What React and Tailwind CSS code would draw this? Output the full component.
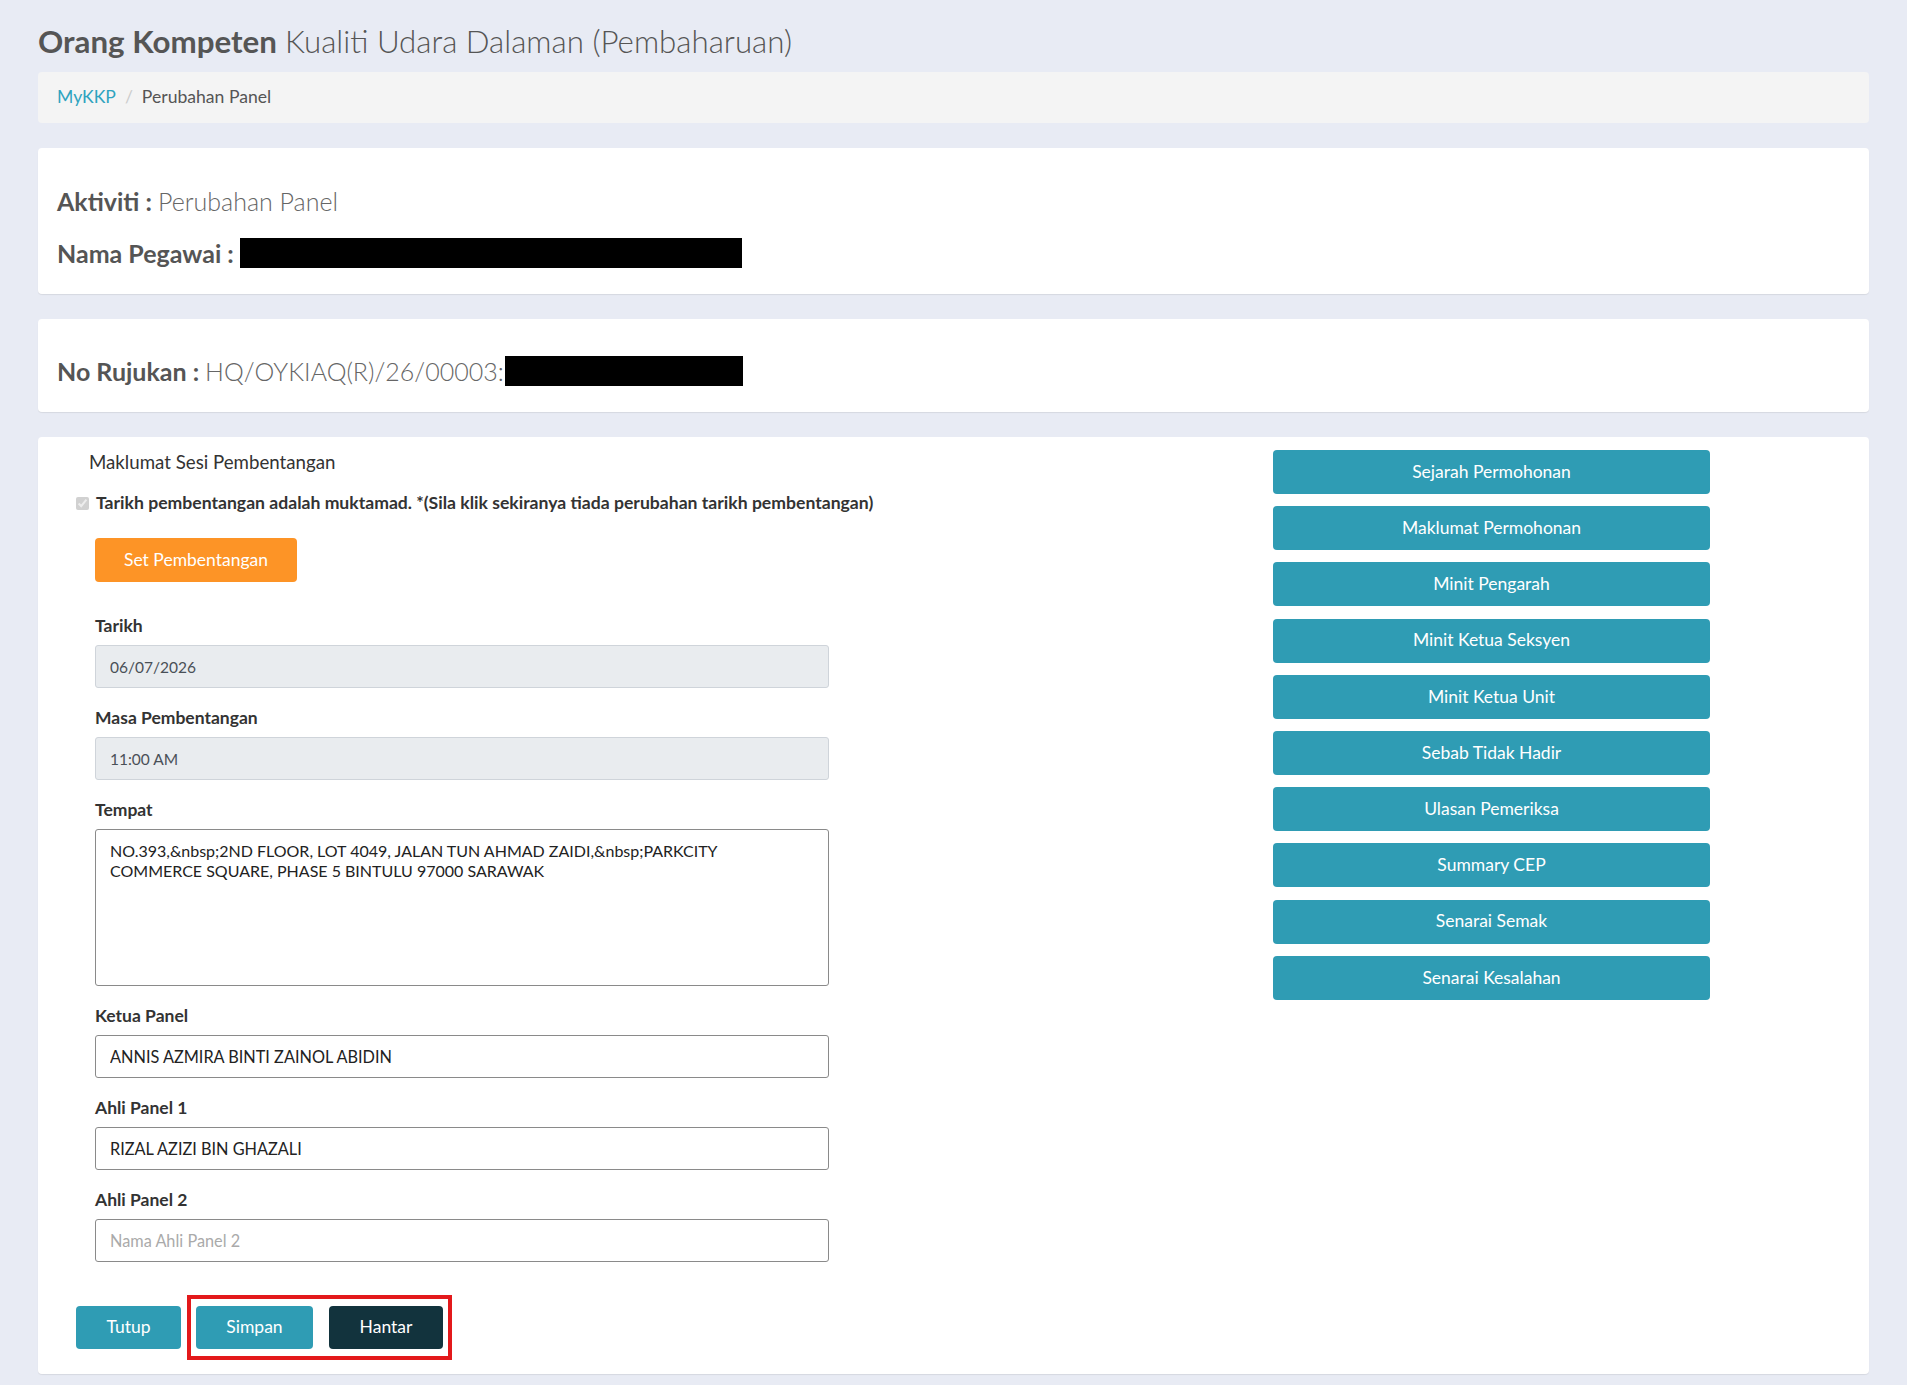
import React from 'react';

const sideButtons = [
    'Sejarah Permohonan',
    'Maklumat Permohonan',
    'Minit Pengarah',
    'Minit Ketua Seksyen',
    'Minit Ketua Unit',
    'Sebab Tidak Hadir',
    'Ulasan Pemeriksa',
    'Summary CEP',
    'Senarai Semak',
    'Senarai Kesalahan',
];

const tempat = 'NO.393,&nbsp;2ND FLOOR, LOT 4049, JALAN TUN AHMAD ZAIDI,&nbsp;PARKCITY COMMERCE SQUARE, PHASE 5 BINTULU 97000 SARAWAK';

function Field({ label, children }) {
    return (
        <div className="mb-[18px]">
            <label className="block text-[17.5px] leading-[24px] font-bold text-[#333] mb-[7px]">{label}</label>
            {children}
        </div>
    );
}

const readOnlyInput = 'w-full h-[43px] rounded-[3px] border border-[#cfd4da] bg-[#e9ecef] px-[14px] text-[15.5px] text-[#495057] outline-none';
const textInput = 'w-full h-[43px] rounded-[3px] border border-[#8a8a8a] bg-white px-[14px] text-[16.3px] text-[#222] outline-none placeholder:text-[#aaa]';

export default function App() {
    return (
        <div className="min-h-screen bg-[#e8ebf4] px-[38px] pb-[10px] font-['Lato',sans-serif] text-[#333]">
            <h3 className="pt-[23px] text-[31.3px] leading-[36px] text-[#555]">
                <span className="font-bold">Orang Kompeten</span> <span className="font-light">Kualiti Udara Dalaman (Pembaharuan)</span>
            </h3>

            <div className="mt-[13px] flex h-[51px] items-center rounded-[4px] bg-[#f4f4f4] pl-[19px] text-[17.6px]">
                <span className="text-[#2ea3bf]">MyKKP</span>
                <span className="px-[9px] text-[#ccc]">/</span>
                <span className="text-[#555]">Perubahan Panel</span>
            </div>

            <div className="mt-[25px] rounded-[4px] bg-white pt-[38px] pb-[26px] pl-[19px] shadow-[0_1px_1px_rgba(0,0,0,0.08)]">
                <div className="flex h-[30px] items-center text-[25px] leading-[30px]">
                    <span className="font-bold text-[#555]">Aktiviti :</span>
                    <span className="ml-[6px] font-light text-[#666]">Perubahan Panel</span>
                </div>
                <div className="mt-[22px] flex h-[30px] items-center text-[25px] leading-[30px]">
                    <span className="font-bold text-[#555]">Nama Pegawai :</span>
                    <span className="ml-[6px] h-[30px] w-[502px] bg-black" />
                </div>
            </div>

            <div className="mt-[25px] rounded-[4px] bg-white pt-[37px] pb-[26px] pl-[19px] shadow-[0_1px_1px_rgba(0,0,0,0.08)]">
                <div className="flex h-[30px] items-center text-[25px] leading-[30px]">
                    <span className="font-bold text-[#555]">No Rujukan :</span>
                    <span className="ml-[6px] font-light text-[#666]">HQ/OYKIAQ(R)/26/00003:</span>
                    <span className="ml-[1px] h-[30px] w-[238px] bg-black" />
                </div>
            </div>

            <div className="mt-[25px] flex rounded-[4px] bg-white pt-[13px] pb-[14px] pl-[38px] shadow-[0_1px_1px_rgba(0,0,0,0.08)]">
                <div className="flex-1">
                    <div className="ml-[13px] text-[18.7px] leading-[24px] text-[#333]">Maklumat Sesi Pembentangan</div>

                    <label className="mt-[17px] flex items-center text-[17.6px] leading-[24px] font-bold text-[#333]">
                        <input type="checkbox" checked disabled readOnly className="m-0 h-[13px] w-[13px]" />
                        <span className="ml-[7px]">Tarikh pembentangan adalah muktamad. *(Sila klik sekiranya tiada perubahan tarikh pembentangan)</span>
                    </label>

                    <div className="ml-[19px] w-[734px]">
                        <button type="button" className="mt-[23px] h-[44px] w-[202px] rounded-[4px] bg-[#fd9426] text-[17.5px] text-white">
                            Set Pembentangan
                        </button>

                        <div className="mt-[32px]">
                            <Field label="Tarikh">
                                <input className={readOnlyInput} value="06/07/2026" readOnly />
                            </Field>
                            <Field label="Masa Pembentangan">
                                <input className={readOnlyInput} value="11:00 AM" readOnly />
                            </Field>
                            <Field label="Tempat">
                                <textarea
                                    className="block h-[157px] w-full resize-none rounded-[3px] border border-[#8a8a8a] bg-white pl-[14px] pr-[24px] pt-[11px] text-[16px] leading-[19.5px] text-[#222] outline-none"
                                    value={tempat}
                                    readOnly
                                />
                            </Field>
                            <Field label="Ketua Panel">
                                <input className={textInput} value="ANNIS AZMIRA BINTI ZAINOL ABIDIN" readOnly />
                            </Field>
                            <Field label="Ahli Panel 1">
                                <input className={textInput} value="RIZAL AZIZI BIN GHAZALI" readOnly />
                            </Field>
                            <div>
                                <label className="block text-[17.5px] leading-[24px] font-bold text-[#333] mb-[7px]">Ahli Panel 2</label>
                                <input className={textInput} placeholder="Nama Ahli Panel 2" />
                            </div>
                        </div>
                    </div>

                    <div className="mt-[33px] flex items-center">
                        <button type="button" className="h-[43px] w-[105px] rounded-[4px] bg-[#2f9cb4] text-[17.5px] text-white">
                            Tutup
                        </button>
                        <div className="ml-[6px] flex gap-[16px] border-4 border-[#e3191b] px-[5px] py-[7px]">
                            <button type="button" className="h-[43px] w-[117px] rounded-[4px] bg-[#2f9cb4] text-[17.5px] text-white">
                                Simpan
                            </button>
                            <button type="button" className="h-[43px] w-[114px] rounded-[4px] bg-[#12333d] text-[17.5px] text-white">
                                Hantar
                            </button>
                        </div>
                    </div>
                </div>

                <div className="mr-[159px] flex w-[437px] flex-col gap-[12.2px]">
                    {sideButtons.map((name) => (
                        <button
                            key={name}
                            type="button"
                            className="h-[44px] w-full rounded-[4px] bg-[#2f9cb4] text-[17.5px] text-white"
                        >
                            {name}
                        </button>
                    ))}
                </div>
            </div>
        </div>
    );
}
